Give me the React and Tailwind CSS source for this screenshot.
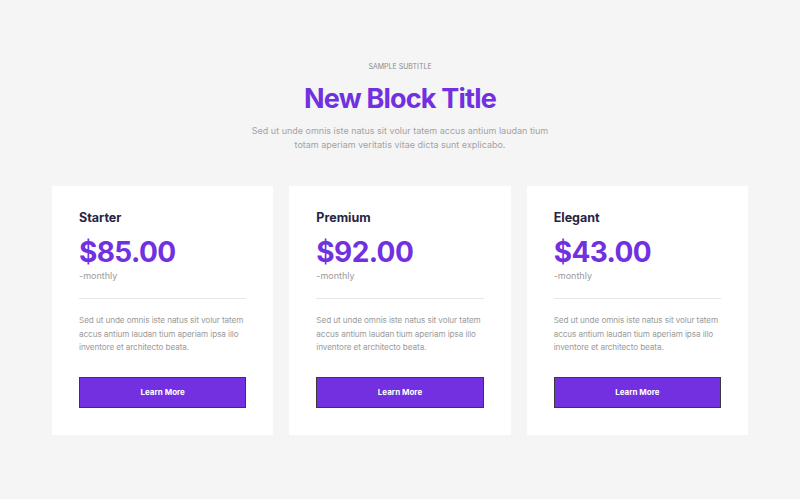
import React from "react";

const plans = [
  { name: "Starter", price: "$85.00" },
  { name: "Premium", price: "$92.00" },
  { name: "Elegant", price: "$43.00" },
];

function PlanCard({ plan }) {
  return (
    <div className="bg-white px-[27px] pt-[23px] pb-[27px]">
      <h3 className="text-[12.5px] font-bold leading-[18px] text-[#2a2342]">{plan.name}</h3>
      <p className="mt-[7px] text-[28px] font-bold leading-[36px] tracking-[-0.6px] text-[#7131e0]">
        {plan.price}
      </p>
      <p className="text-[9px] leading-[12px] text-[#9a9a9a]">-monthly</p>
      <div className="mt-[16px] border-t border-[#e6e6e6]" />
      <p className="mt-[15px] text-[8.2px] leading-[13.5px] tracking-[-0.1px] text-[#9b9b9b]">
        Sed ut unde omnis iste natus sit volur tatem accus antium laudan tium aperiam ipsa illo
        inventore et architecto beata.
      </p>
      <button className="mt-[22px] flex h-[31px] w-full items-center justify-center border border-[#3a3a3a] bg-[#7330e0] text-[8px] font-bold text-white">
        Learn More
      </button>
    </div>
  );
}

export default function App() {
  return (
    <div
      className="min-h-[499px] bg-[#f5f5f5]"
      style={{ fontFamily: "Inter, 'Noto Sans', sans-serif" }}
    >
      <div className="mx-auto max-w-[696px] pt-[62px]">
        <div className="text-center">
          <p className="text-[7px] uppercase leading-[10px] text-[#8a8a8a]">Sample Subtitle</p>
          <h1 className="mt-[10px] text-[27px] font-bold leading-[34px] tracking-[-0.8px] text-[#7131e0]">
            New Block Title
          </h1>
          <p className="mx-auto mt-[8px] max-w-[320px] text-[9px] leading-[14px] text-[#a3a3a3]">
            Sed ut unde omnis iste natus sit volur tatem accus antium laudan tium totam aperiam
            veritatis vitae dicta sunt explicabo.
          </p>
        </div>
        <div className="mt-[34px] grid grid-cols-3 gap-[16px]">
          {plans.map((p) => (
            <PlanCard key={p.name} plan={p} />
          ))}
        </div>
      </div>
    </div>
  );
}
